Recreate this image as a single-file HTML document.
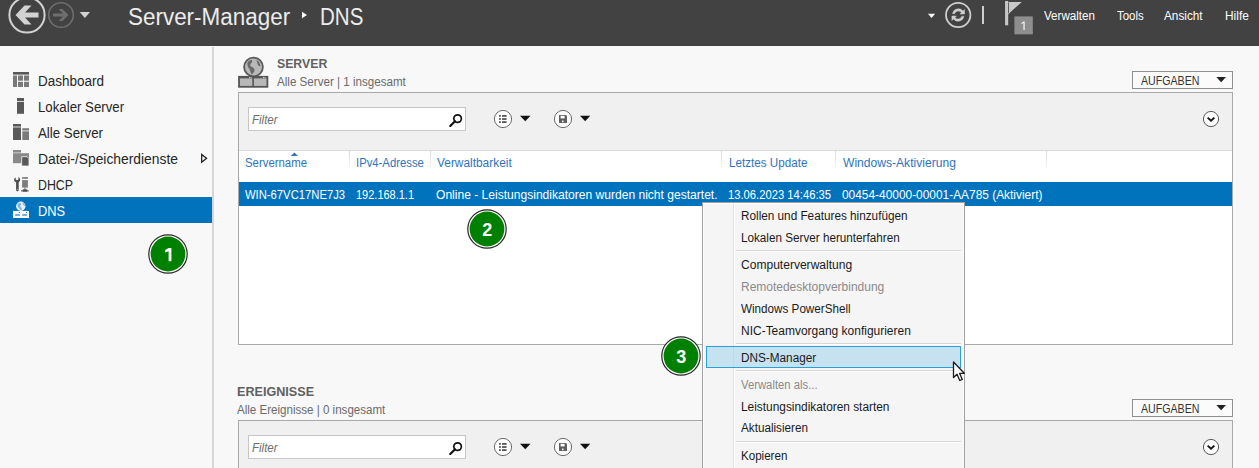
<!DOCTYPE html>
<html><head><meta charset="utf-8"><style>
html,body{margin:0;padding:0;}
body{width:1259px;height:468px;overflow:hidden;position:relative;background:#f8f8f8;font-family:"Liberation Sans",sans-serif;}
.t{position:absolute;white-space:nowrap;line-height:1;transform-origin:0 0;}
.r{position:absolute;box-sizing:content-box;}
svg.r{display:block;}
</style></head><body>
<div class="r" style="left:0px;top:0px;width:1259px;height:46px;background:#424242;"></div>
<svg class="r" style="left:0;top:0" width="100" height="46" viewBox="0 0 100 46">
<circle cx="27" cy="15" r="17.6" fill="none" stroke="#d2d2d2" stroke-width="2"/>
<path d="M15.5 15 L24.5 5.5 L31.5 5.5 L25 12.5 L38.5 12.5 L38.5 17.5 L25 17.5 L31.5 24.5 L24.5 24.5 Z" fill="#d2d2d2"/>
<circle cx="61" cy="15" r="12.3" fill="none" stroke="#6e6e6e" stroke-width="1.6"/>
<path d="M53 13.5 L63 13.5 L58.5 9 L62.5 9 L68.5 15 L62.5 21 L58.5 21 L63 16.5 L53 16.5 Z" fill="#6e6e6e"/>
<path d="M79.7 12 L90 12 L84.85 18 Z" fill="#d2d2d2"/>
</svg>
<div class="t" style="left:128.20px;top:6.33px;font-size:23px;color:#ececec;transform:scaleX(0.9756);">Server-Manager</div>
<svg class="r" style="left:300px;top:10px" width="10" height="10"><path d="M2 1.8 L7 5 L2 8.2 Z" fill="#fff"/></svg>
<div class="t" style="left:319.70px;top:6.33px;font-size:23px;color:#ececec;transform:scaleX(0.8922);">DNS</div>
<svg class="r" style="left:920px;top:0" width="120" height="46"><path d="M8 13.8 L15.1 13.8 L11.55 18.1 Z" fill="#fff"/><circle cx="38.2" cy="15" r="12.2" fill="none" stroke="#cfcfcf" stroke-width="1.8"/><path d="M32.5 13.5 A6 6 0 0 1 43 11 L44.5 9.5 L44.5 14 L40 14 L41.5 12.5 A4 4 0 0 0 34.5 13.8 Z" fill="#cfcfcf" stroke="#cfcfcf" stroke-width="0.5"/><path d="M43.9 16.5 A6 6 0 0 1 33.4 19 L31.9 20.5 L31.9 16 L36.4 16 L34.9 17.5 A4 4 0 0 0 41.9 16.2 Z" fill="#cfcfcf" stroke="#cfcfcf" stroke-width="0.5"/><rect x="62" y="6" width="2" height="18" fill="#cfcfcf"/><rect x="85.1" y="1" width="3.1" height="24.3" fill="#c8c8c8"/><path d="M88.2 1.9 L101.8 1.9 L88.2 14.3 Z" fill="#c8c8c8"/><rect x="88" y="2.5" width="0.9" height="10.5" fill="#555"/><rect x="94.4" y="16.4" width="18.4" height="17.9" fill="#8e8e8e"/></svg>
<svg class="r" style="left:1020px;top:21px" width="7" height="10"><path d="M3.5 0.4 L4.6 0.4 L4.6 9 L3.5 9 L3.5 1.9 L1.5 2.9 L1.5 2 Z" fill="#fff"/></svg>
<div class="t" style="left:1044.20px;top:10.14px;font-size:12px;color:#fff;transform:scaleX(0.9662);">Verwalten</div>
<div class="t" style="left:1117.00px;top:10.14px;font-size:12px;color:#fff;transform:scaleX(0.9549);">Tools</div>
<div class="t" style="left:1164.20px;top:10.14px;font-size:12px;color:#fff;transform:scaleX(0.9807);">Ansicht</div>
<div class="t" style="left:1225.00px;top:10.14px;font-size:12px;color:#fff;transform:scaleX(0.9917);">Hilfe</div>
<div class="r" style="left:212px;top:47px;width:2px;height:421px;background:#d6d6d6;"></div>
<div class="r" style="left:0px;top:197px;width:212px;height:26px;background:#0173bd;"></div>
<div class="t" style="left:37.80px;top:74.35px;font-size:14px;color:#262626;transform:scaleX(0.9641);">Dashboard</div>
<div class="t" style="left:37.80px;top:100.15px;font-size:14px;color:#262626;transform:scaleX(0.9451);">Lokaler Server</div>
<div class="t" style="left:37.80px;top:126.15px;font-size:14px;color:#262626;transform:scaleX(0.9495);">Alle Server</div>
<div class="t" style="left:37.80px;top:152.15px;font-size:14px;color:#262626;transform:scaleX(0.9881);">Datei-/Speicherdienste</div>
<div class="t" style="left:37.80px;top:178.15px;font-size:14px;color:#262626;transform:scaleX(0.8834);">DHCP</div>
<div class="t" style="left:37.80px;top:203.75px;font-size:14px;color:#fff;transform:scaleX(0.9140);">DNS</div>
<svg class="r" style="left:0;top:60px" width="212" height="170" viewBox="0 60 212 170">
<rect x="13" y="72" width="16" height="2.6" fill="#595959"/>
<rect x="13" y="75.5" width="4" height="11.5" fill="#7a7a7a"/>
<rect x="18" y="75.5" width="5" height="5.2" fill="#7a7a7a"/>
<rect x="24" y="75.5" width="5" height="5.2" fill="#7a7a7a"/>
<rect x="18" y="81.8" width="5" height="5.2" fill="#7a7a7a"/>
<rect x="24" y="81.8" width="5" height="5.2" fill="#7a7a7a"/>
<rect x="17" y="98" width="7" height="3" fill="#595959"/>
<rect x="17" y="101.8" width="7" height="12" fill="#595959"/>
<rect x="13" y="124" width="8" height="2.6" fill="#595959"/>
<rect x="13" y="127.4" width="8" height="12.6" fill="#595959"/>
<rect x="22.3" y="128.2" width="6.7" height="2.3" fill="#7a7a7a"/>
<rect x="22.3" y="131.3" width="6.7" height="8.7" fill="#7a7a7a"/>
<rect x="13" y="150" width="8" height="2.6" fill="#8a8a8a"/>
<rect x="13" y="153.2" width="16" height="10" fill="#8a8a8a"/>
<path d="M21.7 156.7 L27 156.7 L29 158.7 L29 166 L21.7 166 Z" fill="#595959" stroke="#f7f7f7" stroke-width="0.8"/>
<path d="M201.7 154.4 L206.6 158.3 L201.7 162.2 Z" fill="none" stroke="#1a1a1a" stroke-width="1.25" stroke-linejoin="miter"/>
<path d="M15.6 177.2 Q13.6 178.4 14.1 180.6 Q14.7 181.9 16.1 182.2 L16.1 190.6 Q17.4 192.2 18.7 190.6 L18.7 182.2 Q20.4 181.3 20.1 179 Q19.6 177.4 18.2 177 L18.6 178.6 Q18.4 180.2 17 180.3 Q15.6 180.1 15.6 178.6 Z" fill="#4a4a4a"/>
<circle cx="17.4" cy="189.3" r="0.55" fill="#dcdcdc"/>
<rect x="22.1" y="177.2" width="5.8" height="1.5" fill="#6a6a6a"/>
<rect x="22.1" y="180.1" width="5.8" height="7.5" fill="#7e7e7e"/>
<rect x="24.5" y="187.6" width="0.9" height="2.4" fill="#555"/>
<rect x="21" y="190" width="7.8" height="1.6" fill="#8a8a8a"/>
<rect x="22.7" y="189.4" width="4.5" height="2.2" fill="#4a4a4a"/>
</svg>
<svg class="r" style="left:0;top:197px" width="40" height="26" viewBox="0 197 40 26">
<circle cx="20.8" cy="206.3" r="4.7" fill="#e6f0f8"/>
<path d="M17.6 204.5 Q19 202.6 21 203.2 Q21.8 204.8 20.2 205.6 Q19.4 206.8 21.2 207.4 Q22.6 208.4 21.6 210 Q19.6 209.6 18.8 208 Q17.2 206.6 17.6 204.5 Z" fill="#7fb3de"/>
<path d="M22.6 202.6 Q24.6 203.6 25.2 206 Q24 206.4 23.4 205 Q22.4 203.8 22.6 202.6 Z" fill="#7fb3de"/>
<rect x="13" y="210.9" width="16" height="7.1" fill="#fff"/>
<rect x="15.1" y="214.1" width="4.8" height="1.8" fill="#6ea6d6"/>
<rect x="22.2" y="214.1" width="4.8" height="1.8" fill="#6ea6d6"/>
<circle cx="19.4" cy="212.4" r="0.7" fill="#2a7fc4"/>
<circle cx="26.5" cy="212.4" r="0.7" fill="#2a7fc4"/>
</svg>
<svg class="r" style="left:145.8px;top:232px" width="44" height="44" viewBox="0 0 44 44"><circle cx="22" cy="22" r="19.2" fill="#fff" stroke="#262626" stroke-width="1.2"/><circle cx="22" cy="22" r="17.4" fill="#008000"/></svg>
<svg class="r" style="left:163.60000000000002px;top:248px" width="10" height="14"><path d="M4.6 0 L7.4 0 L7.4 13.2 L4.6 13.2 L4.6 3.2 L1.2 4.6 L1.2 2 Z" fill="#fff"/></svg>
<svg class="r" style="left:234px;top:52px" width="40" height="40" viewBox="234 52 40 40">
<circle cx="253.5" cy="67" r="9.4" fill="#b9b9b9" stroke="#5a5a5a" stroke-width="1.8"/>
<path d="M247.5 62.5 Q249 59.5 252 60 Q253 62 250.5 64 Q249.5 66 252 67 Q255 68 254.5 71 Q253 74 251.5 74.5 Q250 71 249.5 69 Q247 67 247.5 62.5 Z" fill="#6a6a6a"/>
<path d="M256.5 60 Q260 62 260.5 66 Q259 67 258 65 Q256.5 62 256.5 60 Z" fill="#6a6a6a"/>
<rect x="239" y="76.8" width="28.4" height="10" fill="#b8b8b8" stroke="#555" stroke-width="1.8"/>
<rect x="252.3" y="76.8" width="1.6" height="10" fill="#555"/>
<rect x="239" y="76.8" width="28.4" height="1.6" fill="#555"/>
<rect x="249" y="77.2" width="0.9" height="0.9" fill="#fff"/><rect x="250.6" y="77.2" width="0.9" height="0.9" fill="#fff"/>
<rect x="263" y="77.2" width="0.9" height="0.9" fill="#fff"/><rect x="264.6" y="77.2" width="0.9" height="0.9" fill="#fff"/>
</svg>
<div class="t" style="left:277.20px;top:58.22px;font-size:12.5px;color:#606060;transform:scaleX(0.9819);font-weight:bold;">SERVER</div>
<div class="t" style="left:277.20px;top:75.54px;font-size:12px;color:#6a6a6a;transform:scaleX(0.9670);">Alle Server | 1 insgesamt</div>
<div class="r" style="left:1132px;top:71px;width:99px;height:16px;border:1px solid #8f8f8f;background:#fbfbfb;"></div>
<div class="t" style="left:1141.40px;top:74.64px;font-size:12px;color:#333;transform:scaleX(0.8848);">AUFGABEN</div>
<svg class="r" style="left:1214px;top:77px" width="14" height="8"><path d="M2.3 0.1 L12 0.1 L7.15 5.2 Z" fill="#222"/></svg>
<div class="r" style="left:238px;top:92px;width:993px;height:251px;border:1px solid #a9a9a9;background:#fff;"></div>
<div class="r" style="left:239px;top:93px;width:993px;height:57px;background:#f0f0f0;border-bottom:1px solid #d9d9d9;"></div>
<div class="r" style="left:248px;top:107px;width:216px;height:22px;border:1px solid #c6c6c6;background:#fff;"></div>
<div class="t" style="left:252.20px;top:113.84px;font-size:12px;color:#6d6d6d;transform:scaleX(0.9587);font-style:italic;">Filter</div>
<svg class="r" style="left:448px;top:113px" width="16" height="14" viewBox="0 0 16 14"><circle cx="9.6" cy="5.6" r="3.8" fill="none" stroke="#111" stroke-width="1.7"/><path d="M7 8.3 L2.3 13" stroke="#111" stroke-width="2.2" stroke-linecap="round"/></svg>
<svg class="r" style="left:492px;top:108px" width="100" height="22" viewBox="492 0 100 22"><circle cx="503" cy="11" r="8.6" fill="#fff" stroke="#6a6a6a" stroke-width="1"/><rect x="499" y="7" width="1.8" height="1.8" fill="#555"/><rect x="502" y="7" width="4.6" height="1.8" fill="#555"/><rect x="499" y="10.1" width="1.8" height="1.8" fill="#555"/><rect x="502" y="10.1" width="4.6" height="1.8" fill="#555"/><rect x="499" y="13.2" width="1.8" height="1.8" fill="#555"/><rect x="502" y="13.2" width="4.6" height="1.8" fill="#555"/><path d="M520 7.7 L530.5 7.7 L525.25 13.2 Z" fill="#111"/><circle cx="563" cy="11" r="8.6" fill="#fff" stroke="#6a6a6a" stroke-width="1"/><path d="M559 7 L566 7 L567 8 L567 15 L559 15 Z" fill="#5f5f5f"/><rect x="560.6" y="7.8" width="4" height="2.6" fill="#fff"/><rect x="562" y="12.6" width="1.6" height="1.6" fill="#fff"/><path d="M580 7.7 L590.3 7.7 L585.15 13.2 Z" fill="#111"/></svg>
<svg class="r" style="left:1201px;top:109px" width="20" height="20" viewBox="0 0 20 20"><circle cx="10" cy="10" r="7.6" fill="#fff" stroke="#5a5a5a" stroke-width="1"/><path d="M6.6 8.6 L10 11.8 L13.4 8.6" fill="none" stroke="#111" stroke-width="1.9"/></svg>
<div class="r" style="left:349px;top:151px;width:1px;height:20px;background:linear-gradient(#d8d8d8,#fff);"></div>
<div class="r" style="left:430px;top:151px;width:1px;height:20px;background:linear-gradient(#d8d8d8,#fff);"></div>
<div class="r" style="left:721px;top:151px;width:1px;height:20px;background:linear-gradient(#d8d8d8,#fff);"></div>
<div class="r" style="left:835px;top:151px;width:1px;height:20px;background:linear-gradient(#d8d8d8,#fff);"></div>
<div class="r" style="left:1046px;top:151px;width:1px;height:20px;background:linear-gradient(#d8d8d8,#fff);"></div>
<svg class="r" style="left:290px;top:152px" width="9" height="5"><path d="M0.8 4 L4.4 0.6 L8 4 Z" fill="#2f74c0"/></svg>
<div class="t" style="left:245.30px;top:156.94px;font-size:12px;color:#2f74c0;transform:scaleX(0.9480);">Servername</div>
<div class="t" style="left:356.40px;top:156.94px;font-size:12px;color:#2f74c0;transform:scaleX(0.9417);">IPv4-Adresse</div>
<div class="t" style="left:436.80px;top:156.94px;font-size:12px;color:#2f74c0;transform:scaleX(0.9912);">Verwaltbarkeit</div>
<div class="t" style="left:728.60px;top:156.94px;font-size:12px;color:#2f74c0;transform:scaleX(0.9708);">Letztes Update</div>
<div class="t" style="left:842.90px;top:156.94px;font-size:12px;color:#2f74c0;transform:scaleX(1.0073);">Windows-Aktivierung</div>
<div class="r" style="left:239px;top:182px;width:993px;height:24px;background:#0173bd;"></div>
<div class="t" style="left:244.60px;top:188.64px;font-size:12px;color:#fff;transform:scaleX(0.9374);">WIN-67VC17NE7J3</div>
<div class="t" style="left:355.70px;top:188.64px;font-size:12px;color:#fff;transform:scaleX(0.9154);">192.168.1.1</div>
<div class="t" style="left:435.80px;top:188.64px;font-size:12px;color:#fff;transform:scaleX(1.0050);">Online - Leistungsindikatoren wurden nicht gestartet.</div>
<div class="t" style="left:727.60px;top:188.64px;font-size:12px;color:#fff;transform:scaleX(0.9360);">13.06.2023 14:46:35</div>
<div class="t" style="left:841.50px;top:188.64px;font-size:12px;color:#fff;transform:scaleX(0.9917);">00454-40000-00001-AA785 (Aktiviert)</div>
<svg class="r" style="left:465px;top:207px" width="44" height="44" viewBox="0 0 44 44"><circle cx="22" cy="22" r="19.2" fill="#fff" stroke="#262626" stroke-width="1.2"/><circle cx="22" cy="22" r="17.4" fill="#008000"/></svg>
<div class="t" style="left:482.20px;top:220.56px;font-size:18px;color:#fff;font-weight:bold;">2</div>
<div class="t" style="left:237.10px;top:386.22px;font-size:12.5px;color:#606060;transform:scaleX(1.0082);font-weight:bold;">EREIGNISSE</div>
<div class="t" style="left:237.10px;top:403.74px;font-size:12px;color:#6a6a6a;transform:scaleX(0.9640);">Alle Ereignisse | 0 insgesamt</div>
<div class="r" style="left:1132px;top:399px;width:99px;height:16px;border:1px solid #8f8f8f;background:#fbfbfb;"></div>
<div class="t" style="left:1141.40px;top:402.64px;font-size:12px;color:#333;transform:scaleX(0.8848);">AUFGABEN</div>
<svg class="r" style="left:1214px;top:405px" width="14" height="8"><path d="M2.3 0.1 L12 0.1 L7.15 5.2 Z" fill="#222"/></svg>
<div class="r" style="left:238px;top:420px;width:993px;height:60px;border:1px solid #a9a9a9;background:#f0f0f0;"></div>
<div class="r" style="left:248px;top:435px;width:216px;height:22px;border:1px solid #c6c6c6;background:#fff;"></div>
<div class="t" style="left:252.20px;top:441.84px;font-size:12px;color:#6d6d6d;transform:scaleX(0.9587);font-style:italic;">Filter</div>
<svg class="r" style="left:448px;top:441px" width="16" height="14" viewBox="0 0 16 14"><circle cx="9.6" cy="5.6" r="3.8" fill="none" stroke="#111" stroke-width="1.7"/><path d="M7 8.3 L2.3 13" stroke="#111" stroke-width="2.2" stroke-linecap="round"/></svg>
<svg class="r" style="left:492px;top:436px" width="100" height="22" viewBox="492 0 100 22"><circle cx="503" cy="11" r="8.6" fill="#fff" stroke="#6a6a6a" stroke-width="1"/><rect x="499" y="7" width="1.8" height="1.8" fill="#555"/><rect x="502" y="7" width="4.6" height="1.8" fill="#555"/><rect x="499" y="10.1" width="1.8" height="1.8" fill="#555"/><rect x="502" y="10.1" width="4.6" height="1.8" fill="#555"/><rect x="499" y="13.2" width="1.8" height="1.8" fill="#555"/><rect x="502" y="13.2" width="4.6" height="1.8" fill="#555"/><path d="M520 7.7 L530.5 7.7 L525.25 13.2 Z" fill="#111"/><circle cx="563" cy="11" r="8.6" fill="#fff" stroke="#6a6a6a" stroke-width="1"/><path d="M559 7 L566 7 L567 8 L567 15 L559 15 Z" fill="#5f5f5f"/><rect x="560.6" y="7.8" width="4" height="2.6" fill="#fff"/><rect x="562" y="12.6" width="1.6" height="1.6" fill="#fff"/><path d="M580 7.7 L590.3 7.7 L585.15 13.2 Z" fill="#111"/></svg>
<svg class="r" style="left:1201px;top:437px" width="20" height="20" viewBox="0 0 20 20"><circle cx="10" cy="10" r="7.6" fill="#fff" stroke="#5a5a5a" stroke-width="1"/><path d="M6.6 8.6 L10 11.8 L13.4 8.6" fill="none" stroke="#111" stroke-width="1.9"/></svg>
<div class="r" style="left:702px;top:202px;width:261px;height:280px;border:1px solid #a0a0a0;background:#f5f5f5;box-shadow:inset 0 0 0 1px #fcfcfc;"></div>
<div class="r" style="left:736px;top:250px;width:225px;height:1px;background:#d7d7d7;border-bottom:1px solid #fff;"></div>
<div class="r" style="left:736px;top:343px;width:225px;height:1px;background:#d7d7d7;border-bottom:1px solid #fff;"></div>
<div class="r" style="left:736px;top:370px;width:225px;height:1px;background:#d7d7d7;border-bottom:1px solid #fff;"></div>
<div class="r" style="left:736px;top:441px;width:225px;height:1px;background:#d7d7d7;border-bottom:1px solid #fff;"></div>
<div class="r" style="left:733px;top:203px;width:1px;height:270px;background:rgba(0,0,0,0.075);"></div>
<div class="r" style="left:734px;top:203px;width:1px;height:270px;background:rgba(255,255,255,0.7);"></div>
<div class="r" style="left:706px;top:346px;width:253px;height:20px;border:1px solid #28a0da;background:#c6e2f1;"></div>
<div class="r" style="left:733px;top:347px;width:1px;height:20px;background:rgba(0,0,0,0.04);"></div>
<div class="t" style="left:741.00px;top:210.44px;font-size:12px;color:#1a1a1a;transform:scaleX(0.9791);">Rollen und Features hinzufügen</div>
<div class="t" style="left:741.00px;top:231.94px;font-size:12px;color:#1a1a1a;transform:scaleX(0.9747);">Lokalen Server herunterfahren</div>
<div class="t" style="left:741.00px;top:259.14px;font-size:12px;color:#1a1a1a;transform:scaleX(1.0040);">Computerverwaltung</div>
<div class="t" style="left:741.00px;top:280.94px;font-size:12px;color:#8a8a8a;transform:scaleX(0.9986);">Remotedesktopverbindung</div>
<div class="t" style="left:741.00px;top:302.74px;font-size:12px;color:#1a1a1a;transform:scaleX(0.9727);">Windows PowerShell</div>
<div class="t" style="left:741.00px;top:324.84px;font-size:12px;color:#1a1a1a;transform:scaleX(0.9986);">NIC-Teamvorgang konfigurieren</div>
<div class="t" style="left:741.00px;top:352.24px;font-size:12px;color:#1a1a1a;transform:scaleX(0.9807);">DNS-Manager</div>
<div class="t" style="left:741.00px;top:378.84px;font-size:12px;color:#8a8a8a;transform:scaleX(0.9415);">Verwalten als...</div>
<div class="t" style="left:741.00px;top:400.84px;font-size:12px;color:#1a1a1a;transform:scaleX(0.9892);">Leistungsindikatoren starten</div>
<div class="t" style="left:741.00px;top:422.44px;font-size:12px;color:#1a1a1a;transform:scaleX(0.9747);">Aktualisieren</div>
<div class="t" style="left:741.00px;top:449.54px;font-size:12px;color:#1a1a1a;transform:scaleX(0.9646);">Kopieren</div>
<svg class="r" style="left:659px;top:334px" width="44" height="44" viewBox="0 0 44 44"><circle cx="22" cy="22" r="19.2" fill="#fff" stroke="#262626" stroke-width="1.2"/><circle cx="22" cy="22" r="17.4" fill="#008000"/></svg>
<div class="t" style="left:676.20px;top:347.56px;font-size:18px;color:#fff;font-weight:bold;">3</div>
<svg class="r" style="left:952px;top:361px" width="16" height="22" viewBox="0 0 16 22"><path d="M1.5 1 L1.5 16.5 L5 13.2 L7.8 19.5 L10.3 18.4 L7.6 12.3 L12.3 12.3 Z" fill="#fff" stroke="#1a1a1a" stroke-width="1.3" stroke-linejoin="round"/></svg>
</body></html>
